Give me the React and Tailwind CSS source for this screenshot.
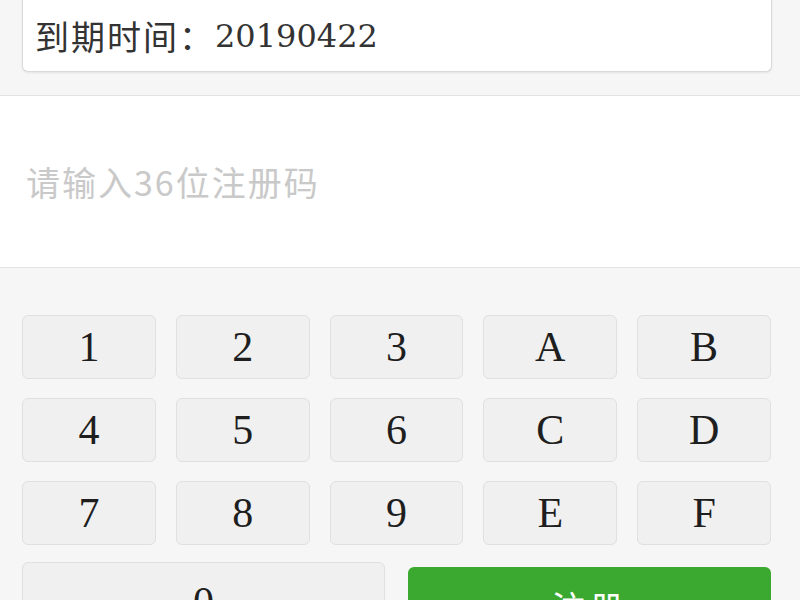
const keys = ["1", "2", "3", "A", "B", "4", "5", "6", "C", "D", "7", "8", "9", "E", "F"];

const cjk = { fontFamily: '"Noto Sans CJK SC", "Noto Sans", sans-serif' };

const Key = ({ label, tall }) => (
  <button
    className={`${tall ? "h-[80px]" : "h-[64px]"} rounded-[6px] border border-[#e0e0e0] bg-[#f0f0f0] text-[42px] leading-none text-[#1e1e1e] font-['Liberation_Serif',serif] flex items-center justify-center`}
  >
    {label}
  </button>
);

export default function App() {
  return (
    <div className="h-[600px] w-[800px] overflow-hidden bg-[#f6f6f6]">
      <div className="pl-[22px] pr-[28px] mb-[23px]">
        <div className="h-[72px] rounded-b-[6px] border border-t-0 border-[#dadada] bg-white shadow-[0_1px_2px_rgba(0,0,0,0.08)] flex items-center pl-[12px]">
          <span className="text-[34px] leading-none tracking-[2px] text-[#333]" style={cjk}>
            到期时间：
          </span>
          <span className="text-[32px] leading-none text-[#333] font-['DejaVu_Serif',serif]">20190422</span>
        </div>
      </div>

      <div className="h-[173px] border-y border-[#e3e3e3] bg-white flex items-center px-[26px]">
        <span className="text-[34px] leading-none tracking-[2px] text-[#c9c9c9]" style={cjk}>
          请输入36位注册码
        </span>
      </div>

      <div className="pl-[22px] pr-[29px] pt-[47px]">
        <div className="grid grid-cols-5 gap-x-[20px] gap-y-[19px]">
          {keys.map((k) => (
            <Key key={k} label={k} />
          ))}
        </div>
        <div className="grid grid-cols-2 items-start gap-x-[23px] mt-[17px]">
          <Key label="0" tall />
          <button
            className="mt-[5px] h-[80px] rounded-[6px] bg-[#3ba92f] text-white text-[34px] leading-none tracking-[4px] flex items-center justify-center"
            style={cjk}
          >
            注册
          </button>
        </div>
      </div>
    </div>
  );
}
